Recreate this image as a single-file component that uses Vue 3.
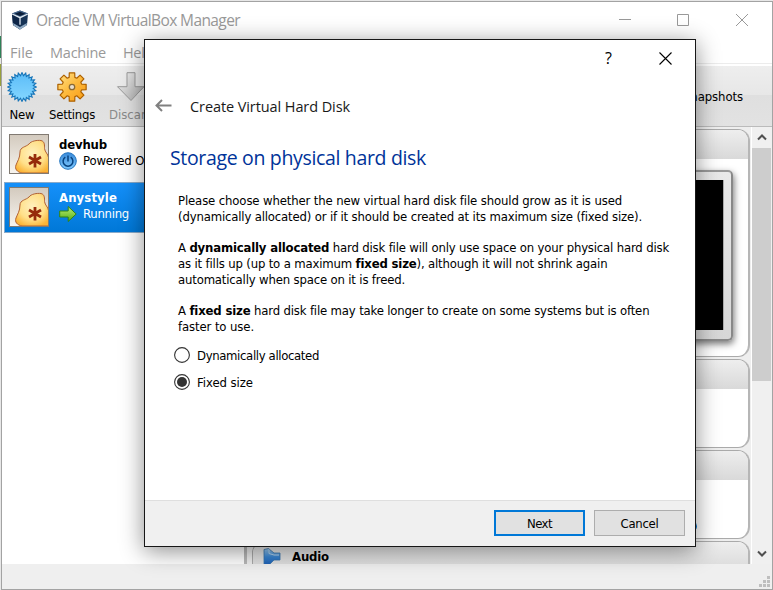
<script setup>
// Spreads each line's letters so that it fills its intended width.
const vFit = {
  mounted(el, { value }) {
    el.style.letterSpacing = '0px'
    const natural = el.getBoundingClientRect().width
    el.style.letterSpacing = (value - natural) / el.textContent.length + 'px'
  },
}

const machines = [
  { name: 'devhub', nameWidth: 48, state: 'Powered Off', stateWidth: 69, icon: 'power', selected: false },
  { name: 'Anystyle', nameWidth: 58, state: 'Running', stateWidth: 46, icon: 'run', selected: true },
]

const paragraphs = [
  [
    { w: 444, parts: [['Please choose whether the new virtual hard disk file should grow as it is used']] },
    { w: 464, parts: [['(dynamically allocated) or if it should be created at its maximum size (fixed size).']] },
  ],
  [
    { w: 491, parts: [['A '], ['dynamically allocated', true], [' hard disk file will only use space on your physical hard disk']] },
    { w: 429, parts: [['as it fills up (up to a maximum '], ['fixed size', true], ['), although it will not shrink again']] },
    { w: 227, parts: [['automatically when space on it is freed.']] },
  ],
  [
    { w: 471, parts: [['A '], ['fixed size', true], [' hard disk file may take longer to create on some systems but is often']] },
    { w: 76, parts: [['faster to use.']] },
  ],
]

const options = [
  { label: 'Dynamically allocated', w: 122, checked: false },
  { label: 'Fixed size', w: 56, checked: true },
]

const point = (r, a) => `${(15 + r * Math.cos(a)).toFixed(2)},${(15 + r * Math.sin(a)).toFixed(2)}`
const burst = Array.from({ length: 48 }, (_, i) => point(i % 2 ? 11.4 : 14.4, (i * Math.PI) / 24)).join(' ')
const gear = Array.from({ length: 8 }, (_, i) => {
  const a = (i * Math.PI) / 4
  return [point(10, a - 0.29), point(14.4, a - 0.19), point(14.4, a + 0.19), point(10, a + 0.29)].join(' ')
}).join(' ')
const grip = [[8, 0], [4, 4], [8, 4], [0, 8], [4, 8], [8, 8]]
</script>

<template>
  <div class="screen">
    <div class="window">
      <header class="titlebar">
        <svg class="cube" width="18" height="20" viewBox="0 0 18 20">
          <path d="M1 3.5 9 .5l8 3-1 11.5-7 4.500L2 15z" fill="#173356" />
          <path d="m1 3.500 8-3 8 3-8 4z" fill="#44658c" />
          <path d="m3.500 3.700 5.500-2 5.500 2-5.500 2.300z" fill="#0b1d38" />
          <path d="m1 3.500 8 4v12L2 15z" fill="#0d2547" />
          <path d="m1.200 4 7.800 3.700L16.800 4M9 7.700v7" stroke="#e2eaf1" stroke-width="1.300" fill="none" />
          <path d="m2 13 7 4 7-4-.5 2.500-6.500 4-6.500-4z" fill="#8fa9c2" />
        </svg>
        <span v-fit="204" class="title">Oracle VM VirtualBox Manager</span>
        <svg class="controls" width="131" height="14" viewBox="0 0 131 14">
          <path d="M0 6.500h12M58.500 1.500h11v11h-11zM117 1l12 12M129 1l-12 12" stroke="#999" fill="none" />
        </svg>
      </header>

      <nav class="menu">
        <span v-fit="23">File</span>
        <span v-fit="56">Machine</span>
        <span v-fit="30">Help</span>
      </nav>

      <div class="toolbar">
        <div class="tool new">
          <svg width="30" height="30" viewBox="0 0 30 30">
            <defs>
              <linearGradient id="blue" x2="0" y2="1"><stop stop-color="#5bbcf8" /><stop offset="1" stop-color="#85d7ff" /></linearGradient>
            </defs>
            <polygon :points="burst" fill="url(#blue)" stroke="#1674b8" stroke-width="1.1" />
          </svg>
          <span v-fit="25">New</span>
        </div>
        <div class="tool settings">
          <svg width="30" height="30" viewBox="0 0 30 30">
            <defs>
              <linearGradient id="gold" x2="1" y2="1"><stop stop-color="#ffe38b" /><stop offset=".5" stop-color="#fdb93c" /><stop offset="1" stop-color="#f79a14" /></linearGradient>
            </defs>
            <polygon :points="gear" fill="url(#gold)" stroke="#ad6100" stroke-width="1.2" stroke-linejoin="round" />
            <circle cx="15" cy="15" r="2.7" fill="#e9dfcf" stroke="#8a6a35" stroke-width="1.3" />
          </svg>
          <span v-fit="46">Settings</span>
        </div>
        <div class="tool discard">
          <svg width="30" height="30" viewBox="0 0 30 30">
            <defs>
              <linearGradient id="silver" x2="1" y2="1"><stop stop-color="#f4f4f4" /><stop offset="1" stop-color="#a9a9a9" /></linearGradient>
            </defs>
            <path d="M11 .7h8v14h9L15 28.500 1.500 14.700H11z" fill="url(#silver)" stroke="#999" />
          </svg>
          <span v-fit="44">Discard</span>
        </div>
        <span v-fit="60" class="snapshots">Snapshots</span>
      </div>

      <main class="content">
        <section class="machines">
          <div v-for="m in machines" :key="m.name" class="machine" :class="{ selected: m.selected }">
            <svg class="os" width="40" height="40" viewBox="0 0 40 40">
              <defs>
                <linearGradient id="tile" x2="0" y2="1"><stop stop-color="#d3cabe" /><stop offset="1" stop-color="#f7f4ef" /></linearGradient>
                <radialGradient id="blob" cx=".5" cy=".4" r=".65"><stop stop-color="#fff0bd" /><stop offset=".6" stop-color="#ffe08a" /><stop offset="1" stop-color="#fbb437" /></radialGradient>
              </defs>
              <rect x=".5" y=".5" width="39" height="39" fill="url(#tile)" />
              <path d="M11 18C11 13 17 13 20 10c2-3 8-4 12-3.500 4 1 3.500 5 3.500 8 .5 4 3.500 5 4 9v15.500H13c-5-1-7.500-4-6-8 1.500-4 4-7 4-13z" fill="url(#blob)" stroke="#b26234" />
              <path d="M26 20v13.500M20 23l12 7M32 23l-12 7" stroke="#962b0b" stroke-width="2.800" />
              <rect x=".5" y=".5" width="39" height="39" fill="none" stroke="#817a72" />
            </svg>
            <div class="info">
              <strong><span v-fit="m.nameWidth">{{ m.name }}</span></strong>
              <div class="state">
                <svg v-if="m.icon === 'power'" width="18" height="18" viewBox="0 0 18 18">
                  <defs><linearGradient id="power" x2="0" y2="1"><stop stop-color="#3889d9" /><stop offset="1" stop-color="#80caff" /></linearGradient></defs>
                  <circle cx="9" cy="9" r="8.300" fill="url(#power)" stroke="#2374bf" />
                  <path d="M6.300 5.200a4.900 4.900 0 1 0 5.400 0M9 3.500v6" fill="none" stroke="#06427f" stroke-width="1.500" />
                </svg>
                <svg v-else width="18" height="18" viewBox="0 0 18 18">
                  <defs><linearGradient id="run" x2="0" y2="1"><stop stop-color="#bdf076" /><stop offset="1" stop-color="#4fac13" /></linearGradient></defs>
                  <path d="M.7 6h8.500V1.500l8 7.500-8 7.500V12H.7z" fill="url(#run)" stroke="#338313" />
                </svg>
                <span v-fit="m.stateWidth">{{ m.state }}</span>
              </div>
            </div>
          </div>
        </section>

        <section class="details">
          <article class="card preview"><div class="cap"></div><div class="monitor"><div class="display"></div></div></article>
          <article class="card"><div class="cap"></div></article>
          <article class="card system"><div class="cap"></div><i class="dot"></i></article>
          <article class="card audio">
            <div class="cap">
              <svg width="18" height="18" viewBox="0 0 18 18">
                <defs><linearGradient id="speaker" x2="0" y2="1"><stop stop-color="#9ccdf5" /><stop offset=".5" stop-color="#3986d4" /><stop offset="1" stop-color="#1958ad" /></linearGradient></defs>
                <path d="M1 1.500 5.500.5 11 5h6v7h-6l-5.500 5.500-4.500-1z" fill="url(#speaker)" stroke="#3875ac" stroke-width=".8" />
                <path d="M6 1.500v4l5 1.500h5" fill="none" stroke="#b5d5ee" />
              </svg>
              <strong><span v-fit="37">Audio</span></strong>
            </div>
          </article>
        </section>

        <div class="scrollbar">
          <div class="arrow"><svg width="10" height="7" viewBox="0 0 10 7"><path d="m1 5.500 4-4 4 4" fill="none" stroke="#505050" stroke-width="2" /></svg></div>
          <div class="thumb"></div>
          <div class="arrow down"><svg width="10" height="7" viewBox="0 0 10 7"><path d="m1 1.500 4 4 4-4" fill="none" stroke="#505050" stroke-width="2" /></svg></div>
        </div>
      </main>

      <footer class="statusbar">
        <svg width="11" height="11" viewBox="0 0 11 11"><rect v-for="g in grip" :key="g.join()" :x="g[0]" :y="g[1]" width="3" height="3" fill="#bfbfbf" /></svg>
      </footer>
    </div>

    <div class="dialog">
      <div class="dialog-bar">
        <span class="help">?</span>
        <svg width="13" height="13" viewBox="0 0 13 13"><path d="m.5.5 12 12M12.500.5l-12 12" stroke="#000" stroke-width="1.100" /></svg>
      </div>
      <div class="dialog-head">
        <svg width="17" height="13" viewBox="0 0 17 13"><path d="M16.500 6.500H2M7 1 1.500 6.500 7 12" fill="none" stroke="#808080" stroke-width="2" /></svg>
        <span v-fit="160">Create Virtual Hard Disk</span>
      </div>
      <h1><span v-fit="256">Storage on physical hard disk</span></h1>
      <div class="copy">
        <p v-for="(p, i) in paragraphs" :key="i">
          <span v-for="(line, j) in p" :key="j" class="line"><span v-fit="line.w"><template v-for="(part, k) in line.parts" :key="k"><b v-if="part[1]">{{ part[0] }}</b><template v-else>{{ part[0] }}</template></template></span></span>
        </p>
      </div>
      <div class="options">
        <label v-for="o in options" :key="o.label">
          <svg width="16" height="16" viewBox="0 0 16 16">
            <circle cx="8" cy="8" r="7.400" fill="#fff" stroke="#333" stroke-width="1.100" />
            <circle v-if="o.checked" cx="8" cy="8" r="5" fill="#333" />
          </svg>
          <span v-fit="o.w">{{ o.label }}</span>
        </label>
      </div>
      <div class="actions">
        <button class="primary"><span v-fit="25">Next</span></button>
        <button><span v-fit="38">Cancel</span></button>
      </div>
    </div>
  </div>
</template>

<style>
body { overflow: hidden; }
</style>

<style scoped>
* { box-sizing: border-box; }
.screen { position: relative; width: 773px; height: 590px; padding: 1px 0 0 1px; background: linear-gradient(#e7e7e7 36px, #2f8157 36px 58px, #e7e7e7 58px 64px, #97a03c 64px 86px, #e7e7e7 86px); font: 13px/16px "DejaVu Sans Condensed", "DejaVu Sans", sans-serif; font-stretch: condensed; white-space: nowrap; color: #000; overflow: hidden; }
.window { display: flex; flex-direction: column; width: 772px; height: 589px; border: 1px solid #a3a3a3; background: #efefef; }
.titlebar { display: flex; align-items: center; height: 38px; padding: 0 22px 2px 9px; background: #fff; font: 15.500px/20px "Open Sans", sans-serif; color: #999; }
.title { margin-left: 7px; }
.controls { margin-left: auto; }
.menu { display: flex; gap: 17px; height: 24px; padding: 2px 8px 0; background: #fff; font: 14.500px/21px "Open Sans", sans-serif; color: #999; border-bottom: 1px solid #ececec; }
.toolbar { display: flex; height: 63px; padding: 6px 29px 0 5px; border-top: 2px solid #fff; background: linear-gradient(#eee, #e7e7e7 48%, #dfdfdf 49%, #e2e2e2); border-bottom: 1px solid #bbb; }
.tool { display: flex; flex-direction: column; align-items: center; gap: 5px; height: 51px; }
.new { width: 30px; }
.settings { width: 46px; margin-left: 12px; }
.discard { width: 44px; margin-left: 14px; color: #8a8a8a; }
.snapshots { margin-left: auto; padding-top: 17px; }
.content { display: flex; height: 437px; }
.machines { width: 242px; padding: 2px 0 2px 2px; background: #fff; }
.machine { display: flex; width: 239px; height: 51px; padding: 5px; }
.machine + .machine { margin-top: 2px; }
.selected { color: #fff; border: 1px solid #89aaca; padding: 4px; background: linear-gradient(#1590fa, #0078d7); }
.os { flex: none; }
.info { margin-left: 10px; padding-top: 3px; }
.info strong { display: block; height: 15px; }
.state { display: flex; align-items: center; gap: 6px; height: 17px; }
.details { width: 507px; padding: 2px 0 0 5px; background: #eee; border-left: 3px solid #b8b8b8; overflow: hidden; }
.card { position: relative; width: 498px; height: 89px; margin-bottom: 2px; border: 1px solid #aaa; border-right: 2px solid #b6b6b6; border-radius: 12px; background: #fff; overflow: hidden; }
.preview { height: 228px; }
.cap { display: flex; align-items: center; height: 29px; padding-left: 10px; background: linear-gradient(#eee, #d9d9d9); }
.monitor { width: 220px; height: 171px; margin: 11px 0 0 260px; padding: 8px 7px 8px 9px; border: 2px solid #888; border-top-color: #999; border-radius: 5px; background: linear-gradient(#e9e9e9, #d7d7d7); box-shadow: 1px 3px 7px #777; }
.display { height: 150px; background: #000; border-right: 1px solid #aaa; }
.dot { position: absolute; right: 51px; top: 71px; width: 9px; height: 9px; border-radius: 50%; background: #087bd5; }
.audio strong { margin-left: 11px; }
.scrollbar { display: flex; flex-direction: column; width: 21px; padding-right: 1px; background: #f0f0f0; border-left: 1px solid #fff; }
.arrow { display: flex; justify-content: center; align-items: center; height: 21px; }
.thumb { height: 233px; background: #cdcdcd; }
.down { margin-top: auto; }
.statusbar { display: flex; height: 25px; padding: 12px 2px 0; justify-content: flex-end; background: #efefef; }
.dialog { position: absolute; left: 144px; top: 39px; width: 552px; height: 508px; display: flex; flex-direction: column; border: 1px solid #171717; background: #fff; box-shadow: 0 4px 22px rgba(0, 0, 0, .45); }
.dialog-bar { display: flex; justify-content: flex-end; align-items: center; height: 36px; padding-right: 23px; font: 16px/20px "Open Sans", sans-serif; }
.help { margin-right: 47px; }
.dialog-head { display: flex; align-items: center; gap: 18px; height: 28px; margin-top: 17px; padding-left: 10px; font: 14.500px/20px "Open Sans", sans-serif; color: #191919; }
.dialog-head svg { margin-bottom: 3px; }
h1 { margin: 23px 0 0 25px; height: 30px; font: 19.500px/28px "Open Sans", sans-serif; color: #003399; }
.copy { padding: 19px 0 0 33px; }
p { margin: 0 0 15px; }
.line { display: block; height: 16px; }
.options { display: flex; flex-direction: column; gap: 11px; margin: -3px 0 0 29px; }
.options label { display: flex; align-items: center; gap: 7px; height: 16px; }
.options span { padding-top: 2px; }
.actions { display: flex; justify-content: flex-end; gap: 9px; height: 46px; margin-top: auto; padding: 9px 10px 0; border-top: 1px solid #dfdfdf; background: #f0f0f0; }
button { width: 91px; height: 26px; padding: 2px 0 0; border: 1px solid #adadad; background: #e1e1e1; font: inherit; color: #000; }
.primary { border: 2px solid #0078d7; }
</style>
